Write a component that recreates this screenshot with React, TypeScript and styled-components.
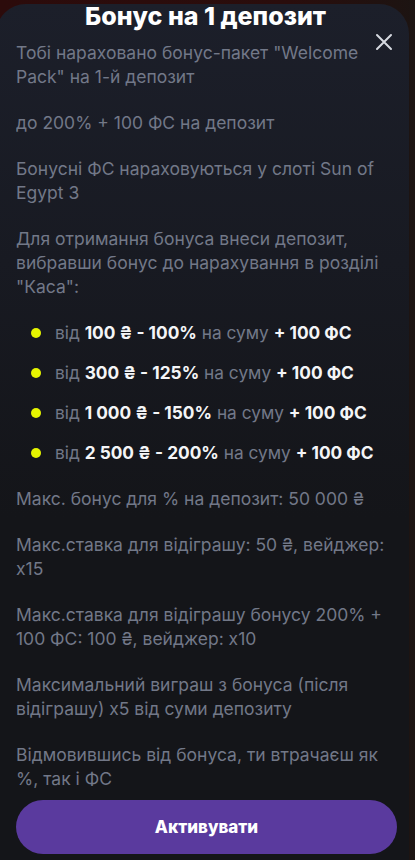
import styled, { createGlobalStyle } from "styled-components";

const GlobalStyle = createGlobalStyle`
  html, body {
    margin: 0;
    padding: 0;
    background: #2a0c0c;
    font-family: Inter, "Noto Sans", sans-serif;
  }
  * { box-sizing: border-box; }
`;

const Backdrop = styled.div`
  width: 415px;
  height: 860px;
  padding-top: 4px;
  background: linear-gradient(90deg, #2c0b0b 0%, #2a0d0c 70%, #1c1412 100%);
  overflow: hidden;
`;

const Sheet = styled.section`
  position: relative;
  height: 856px;
  margin: 0 0 0 -4px;
  width: 413px;
  border-radius: 30px 30px 0 0;
  background: linear-gradient(180deg, #1c1f2a 0%, #181a22 30%, #141519 60%, #141519 100%);
  display: flex;
  flex-direction: column;
  padding: 0 14px 0 20px;
`;

const Title = styled.h2`
  margin: -1px 0 0;
  text-align: center;
  font-size: 25px;
  line-height: 26px;
  font-weight: 800;
  color: #ffffff;
`;

const CloseButton = styled.button`
  position: absolute;
  top: 28px;
  right: 15px;
  width: 20px;
  height: 20px;
  padding: 0;
  border: none;
  background: none;
  color: #d6d9e0;
  display: flex;
  align-items: center;
  justify-content: center;
`;

const Body = styled.div`
  flex: 1;
  margin-top: 12px;
  overflow: hidden;
`;

const Text = styled.p`
  margin: 0 0 22px;
  font-size: 17.5px;
  line-height: 24px;
  color: #727888;

  &:last-child {
    margin-bottom: 0;
  }
`;

const List = styled.ul`
  list-style: none;
  margin: 0 0 22px;
  padding: 0;
  display: flex;
  flex-direction: column;
  gap: 16px;
`;

const Item = styled.li`
  display: flex;
  align-items: center;
  gap: 14px;
  padding-left: 15px;
  font-size: 17.3px;
  line-height: 24px;
  color: #727888;
  white-space: nowrap;
`;

const Dot = styled.span`
  width: 10px;
  height: 10px;
  border-radius: 50%;
  background: #e6f500;
  flex-shrink: 0;
`;

const Strong = styled.b`
  color: #f4f5f7;
  font-weight: 700;
`;

const ActivateButton = styled.button`
  margin: 10px 0 6px 0;
  width: 381px;
  height: 54px;
  border: none;
  border-radius: 27px;
  background: #5a3a9e;
  color: #ffffff;
  font-family: Inter, "Noto Sans", sans-serif;
  font-size: 17px;
  font-weight: 800;
`;

const tiers = [
  { from: "100 ₴", pct: "100%" },
  { from: "300 ₴", pct: "125%" },
  { from: "1 000 ₴", pct: "150%" },
  { from: "2 500 ₴", pct: "200%" },
];

export default function App() {
  return (
    <>
      <GlobalStyle />
      <Backdrop>
        <Sheet>
          <Title>Бонус на 1 депозит</Title>
          <CloseButton aria-label="Закрити">
            <svg width="18" height="18" viewBox="0 0 18 18" fill="none">
              <path d="M2 2L16 16M16 2L2 16" stroke="currentColor" strokeWidth="2" strokeLinecap="round" />
            </svg>
          </CloseButton>
          <Body>
            <Text>Тобі нараховано бонус-пакет "Welcome Pack" на 1-й депозит</Text>
            <Text>до 200% + 100 ФС на депозит</Text>
            <Text>Бонусні ФС нараховуються у слоті Sun of Egypt 3</Text>
            <Text>
              Для отримання бонуса внеси депозит, вибравши бонус до нарахування в розділі "Каса":
            </Text>
            <List>
              {tiers.map((t) => (
                <Item key={t.from}>
                  <Dot />
                  <span>
                    від <Strong>{t.from} - {t.pct}</Strong> на суму <Strong>+ 100 ФС</Strong>
                  </span>
                </Item>
              ))}
            </List>
            <Text>Макс. бонус для % на депозит: 50 000 ₴</Text>
            <Text>Макс.ставка для відіграшу: 50 ₴, вейджер: x15</Text>
            <Text>Макс.ставка для відіграшу бонусу 200% + 100 ФС: 100 ₴, вейджер: x10</Text>
            <Text>Максимальний виграш з бонуса (після відіграшу) x5 від суми депозиту</Text>
            <Text>Відмовившись від бонуса, ти втрачаєш як %, так і ФС</Text>
          </Body>
          <ActivateButton>Активувати</ActivateButton>
        </Sheet>
      </Backdrop>
    </>
  );
}
